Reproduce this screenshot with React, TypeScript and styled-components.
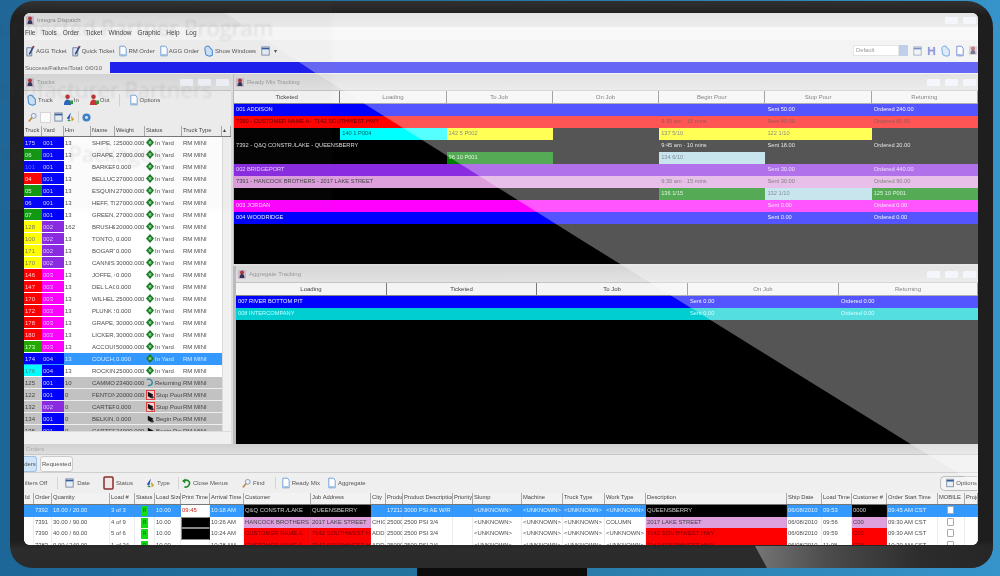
import React from "react";
import styled, { createGlobalStyle } from "styled-components";

const Global = createGlobalStyle`
  html, body { margin: 0; padding: 0; width: 1000px; height: 576px; overflow: hidden; }
  body { font-family: "Liberation Sans", Arial, sans-serif; }
  * { box-sizing: border-box; }
`;

const Page = styled.div`
  position: relative; width: 1000px; height: 576px; overflow: hidden;
  padding-top: 1px; display: flex; flex-direction: column; align-items: flex-start;
  background: linear-gradient(90deg, #1d6698 0%, #24749f 45%, #3694cb 100%);
`;
const Monitor = styled.div`
  position: relative; margin-left: 10px; width: 983px; height: 567px; flex: none;
  padding: 12px 15px 23px 14px; border-radius: 24px 26px 22px 22px;
  background: linear-gradient(180deg, #303030 0, #2a2a2a 6px, #1e1e1e 14px, #1e1e1e 540px, #2c2c2c 548px, #2a2a2a 100%);
`;
const BezelGlare = styled.div`
  position: absolute; left: 745px; bottom: 0; width: 238px; height: 22px; border-bottom-right-radius: 22px;
  clip-path: polygon(0 0, 100% 0, 100% 100%, 12px 100%);
  background: linear-gradient(90deg, #757575 0, #4c4c4c 30%, #2c2c2c 70%, #262626 100%);
`;
const Stand = styled.div`
  margin-left: 417px; width: 170px; height: 8px; flex: none; background: #0c0c0c;
`;
const Screen = styled.div`
  position: relative; width: 954px; height: 532px; overflow: hidden; border-radius: 6px; background: #f0f0f0;
`;
const Content = styled.div`
  display: flex; flex-direction: column; width: 954px; height: 532px; filter: blur(0.6px);
  font-size: 6px; color: #333; line-height: 1;
`;
const Glare = styled.div`
  position: absolute; inset: 0; background: rgba(255,255,255,0.333); pointer-events: none;
  clip-path: polygon(201px 0, 293px 61px, 559px 228px, 885px 430px, 954px 472px, 954px 0);
`;
const Ghost = styled.div`
  position: absolute; left: 0; top: 0; width: 332px; height: 210px; overflow: hidden;
  background: rgba(120,130,140,0.03); pointer-events: none; filter: blur(0.8px);
  font-family: "Open Sans", sans-serif; font-size: 22px; color: rgba(70,80,90,0.13); white-space: nowrap;
`;
const GhostLine = styled.div<{ $l: number; $t: number }>`
  position: absolute; left: ${p => p.$l}px; top: ${p => p.$t}px;
`;

const TitleBar = styled.div`
  height: 14px; flex: none; display: flex; align-items: center; gap: 3px; padding: 0 2px;
  background: linear-gradient(180deg, #d8d8d8, #e4e4e4); color: #8a8a8a;
`;
const WinBtn = styled.span`
  width: 13px; height: 7px; background: #eef2f8; border-radius: 1px; margin-left: 2px;
`;
const Spacer = styled.span` flex: 1; `;
const MenuBar = styled.div`
  height: 13px; flex: none; display: flex; align-items: center; gap: 6px; padding-left: 1px;
  background: #f6f6f6; font-size: 6.5px; color: #444;
`;
const Toolbar = styled.div<{ $h?: number; $gap?: number; $pl?: number }>`
  height: ${p => p.$h ?? 21}px; flex: none; display: flex; align-items: center; gap: ${p => p.$gap ?? 5}px;
  padding-left: ${p => p.$pl ?? 2}px; padding-right: 1px; background: #efefef; color: #555; font-size: 6px; white-space: nowrap;
`;
const Tool = styled.span<{ $gap?: number }>`
  display: inline-flex; align-items: center; gap: ${p => p.$gap ?? 1}px;
`;
const SelectBox = styled.span<{ $w?: number }>`
  width: ${p => p.$w ?? 46}px; height: 11px; background: #fff; border: 1px solid #d8d8d8; font-size: 5.8px; padding: 2px; color: #666;
`;
const SpinBtn = styled.span`
  width: 9px; height: 11px; background: #9fb8de; margin-left: -5px;
`;
const StatusStrip = styled.div`
  height: 13px; flex: none; display: flex; align-items: center; background: #f0f0f0; color: #666; white-space: nowrap;
`;
const StatusLabel = styled.span` width: 86px; flex: none; padding-left: 1px; `;
const Progress = styled.div`
  flex: 1; height: 11px; background: #1c1cf0;
`;
const Main = styled.div`
  height: 370px; flex: none; display: flex; gap: 2px; background: #ddd;
`;
const LeftPanel = styled.div`
  width: 207px; flex: none; display: flex; flex-direction: column; background: #f0f0f0; overflow: hidden;
`;
const RightCol = styled.div`
  flex: 1; display: flex; flex-direction: column; gap: 2px; min-width: 0;
`;
const PanelTitle = styled.div`
  height: 17px; flex: none; display: flex; align-items: center; gap: 3px; padding: 0 2px;
  background: linear-gradient(180deg, #d6d6d6, #e2e2e2); color: #999; font-size: 6px;
  border-bottom: 1px solid #c4c4c4;
`;
const TruckHead = styled.div`
  height: 11px; flex: none; display: grid; grid-template-columns: ${"18px 22px 27px 24px 30px 37px 40px 9px"};
  background: #efefef; border-bottom: 1px solid #777;
`;
const HeadCell = styled.div`
  padding: 2px 1px; border-right: 1px solid #aaa; color: #444; overflow: hidden; white-space: nowrap; text-align: left; font-size: 5.8px;
`;
const TruckBody = styled.div`
  height: 294px; flex: none; display: flex; background: #fff; overflow: hidden;
`;
const TruckRows = styled.div`
  width: 198px; flex: none; display: flex; flex-direction: column; overflow: hidden;
`;
const TruckRow = styled.div<{ $bg?: string; $c?: string }>`
  height: 12px; flex: none; display: grid; grid-template-columns: 18px 22px 27px 24px 30px 37px 40px;
  background: ${p => p.$bg ?? "#fff"}; color: ${p => p.$c ?? "#4c4c4c"}; align-items: stretch;
  border-bottom: 1px solid ${p => (p.$bg === "#c2c2c2" ? "#eee" : "transparent")};
`;
const TCell = styled.div<{ $bg?: string; $c?: string }>`
  background: ${p => p.$bg ?? "transparent"}; color: ${p => p.$c ?? "inherit"}; overflow: hidden; white-space: nowrap;
  padding: 0 1px; display: flex; align-items: center; gap: 1px;
`;
const ScrollV = styled.div`
  width: 9px; flex: none; background: #f0f0f0; border-left: 1px solid #ddd; position: relative;
`;
const ScrollH = styled.div`
  height: 8px; flex: none; background: #f0f0f0; border-top: 1px solid #ddd;
`;
const TrackPanel = styled.div<{ $h: number; $pl: number }>`
  height: ${p => p.$h}px; flex: none; display: flex; flex-direction: column; background: #000; overflow: hidden;
  border-left: ${p => p.$pl}px solid #bbb;
`;
const TrackGrid = styled.div<{ $cols: string }>`
  display: grid; grid-template-columns: ${p => p.$cols};
`;
const TrackHead = styled(TrackGrid)`
  height: 13px; flex: none; background: #f4f4f4; border-bottom: 1px solid #888;
`;
const TrackHeadCell = styled.div`
  text-align: center; padding-top: 3px; border-right: 1px solid #777; color: #444;
`;
const TrackRowBox = styled(TrackGrid)<{ $bg?: string; $c?: string }>`
  height: 12px; flex: none; background: ${p => p.$bg ?? "#000"}; color: ${p => p.$c ?? "#fff"}; font-size: 5.7px;
`;
const TrackCell = styled.div<{ $bg?: string; $c?: string; $span?: number; $start?: number }>`
  background: ${p => p.$bg ?? "transparent"}; color: ${p => p.$c ?? "inherit"};
  grid-column: ${p => p.$start ?? "auto"} / span ${p => p.$span ?? 1};
  padding: 3px 2px 0; white-space: nowrap; overflow: hidden;
`;
const Fill = styled.div` flex: 1; background: #000; `;
const Orders = styled.div`
  flex: 1; display: flex; flex-direction: column; background: #eee; overflow: hidden; min-height: 0;
`;
const OrdersTitle = styled.div`
  height: 11px; flex: none; padding: 2px 2px 0; background: linear-gradient(180deg, #cfcfcf, #dedede); color: #aaa;
  border-bottom: 1px solid #c8c8c8;
`;
const Tabs = styled.div`
  height: 18px; flex: none; display: flex; align-items: flex-end; gap: 3px; background: #ededed; border-bottom: 1px solid #d0d0d0;
`;
const Tab = styled.div<{ $on?: boolean; $w: number }>`
  width: ${p => p.$w}px; height: 16px; border: 1px solid ${p => (p.$on ? "#9dc2e6" : "#ccc")};
  border-radius: ${p => (p.$on ? "0 3px 3px 0" : "3px")}; border-left-width: ${p => (p.$on ? 0 : 1)}px;
  background: ${p => (p.$on ? "#cfe4f7" : "#f7f7f7")}; color: #555; display: flex; align-items: center; justify-content: center;
  overflow: hidden; white-space: nowrap;
`;
const OptionsBtn = styled.span`
  width: 37px; height: 15px; border: 1px solid #bbb; border-right: 0; border-radius: 5px 0 0 5px; display: inline-flex; align-items: center; gap: 2px;
  padding-left: 5px; background: #f4f4f4; overflow: hidden; color: #555;
`;
const Divider = styled.span`
  width: 1px; height: 12px; background: #d4d4d4; flex: none;
`;
const ToolGap = styled.span<{ $w: number }>` width: ${p => p.$w}px; flex: none; `;
const ORDER_COLS = "10px 18px 58px 25px 20px 26px 29px 34px 67px 60px 15px 17px 50px 20px 49px 41px 42px 41px 141px 35px 30px 35px 51px 27px 13px";
const OrdHead = styled.div`
  height: 12px; flex: none; display: grid; grid-template-columns: ${ORDER_COLS}; background: #f2f2f2; border-bottom: 1px solid #777;
`;
const OrdRow = styled.div<{ $bg?: string; $c?: string }>`
  height: 11.7px; flex: none; display: grid; grid-template-columns: ${ORDER_COLS};
  background: ${p => p.$bg ?? "#fff"}; color: ${p => p.$c ?? "#4c4c4c"}; font-size: 5.9px;
`;
const OrdCell = styled.div<{ $bg?: string; $c?: string; $bd?: boolean }>`
  background: ${p => p.$bg ?? "transparent"}; color: ${p => p.$c ?? "inherit"};
  padding: 3px 1px 0; overflow: hidden; white-space: nowrap; display: flex; justify-content: flex-start;
  ${p => (p.$bd ? "border: 1px solid #888;" : "")}
  border-right: 1px solid rgba(120,120,120,0.14);
`;
const CheckBox = styled.span`
  width: 7px; height: 8px; border: 1px solid #aaa; border-radius: 1px; background: #fff; margin-left: 8px; margin-top: -2px;
`;
const GreenBadge = styled.span`
  width: 7px; height: 10px; background: #11dd11; margin: -2px 0 0 5px; font-size: 5px; padding-top: 2px; color: #063; text-align: center;
`;

/* drawings */
const Doc = ({ c = "#6fa2d8" }: { c?: string }) => (
  <svg width="8" height="12" viewBox="0 0 10 14"><path d="M1 1h6l2 3v9H1z" fill="#fff" stroke={c} strokeWidth="1.2" /><path d="M2 11c2 1 5 1 6 0" stroke={c} fill="none" /></svg>
);
const Pen = () => (
  <svg width="9" height="12" viewBox="0 0 11 14"><path d="M1 3h6v10H1z" fill="#dfe8f6" stroke="#5b6f99" /><path d="M9.5 1 4 11" stroke="#33457a" strokeWidth="2" /><path d="M9.5 1l-1 2" stroke="#c33" strokeWidth="2" /></svg>
);
const Windows = () => (
  <svg width="10" height="12" viewBox="0 0 12 14"><path d="M1 4C1 1 6 0 7 3l3 3v6c-2 2-7 1-8-1z" fill="#cfe2f8" stroke="#4b8fd6" strokeWidth="1.3" /></svg>
);
const Person = ({ c = "#2a66c4" }: { c?: string }) => (
  <svg width="10" height="12" viewBox="0 0 11 13"><circle cx="5" cy="3" r="2.5" fill="#b33" /><path d="M1 12c0-4 2-6 4-6s4 2 4 6z" fill={c} /><path d="M8 7h3v4H8z" fill="#2a9a3a" /></svg>
);
const AppGlyph = () => (
  <svg width="8" height="11" viewBox="0 0 10 13"><path d="M0 1h10v11H0z" fill="#c8b8c8" /><circle cx="5" cy="4" r="2.4" fill="#a33" /><path d="M2 11c0-3 1-5 3-5s3 2 3 5z" fill="#335" /></svg>
);
const Diamond = () => (
  <svg width="8" height="9" viewBox="0 0 9 10" style={{ flex: "none" }}><path d="M4.5 0 9 5 4.5 10 0 5z" fill="#1c7a2a" /><rect x="3" y="3.5" width="3" height="3" fill="#7fce7f" /></svg>
);
const Returning = () => (
  <svg width="8" height="9" viewBox="0 0 9 10" style={{ flex: "none" }}><path d="M1 1.5c4-1 6 1 6 3.5S5 8.5 2 8.5" fill="none" stroke="#2a8aa0" strokeWidth="1.6" /></svg>
);
const Pour = ({ stop }: { stop?: boolean }) => (
  <svg width="9" height="10" viewBox="0 0 10 11" style={{ flex: "none" }}>
    {stop && <rect x="0.5" y="0.5" width="9" height="10" fill="#f4d0d0" stroke="#d33" />}
    <path d="M2 2l6 3-2 4-4-2z" fill="#111" /><circle cx="7" cy="8" r="1.5" fill="#333" />
  </svg>
);
const Mag = () => (
  <svg width="9" height="11" viewBox="0 0 11 12"><circle cx="7" cy="4" r="3" fill="#e8eef8" stroke="#7a8fb0" /><path d="M5 6 1 11" stroke="#c88a3a" strokeWidth="2" /></svg>
);
const Calendar = () => (
  <svg width="9" height="10" viewBox="0 0 11 12"><rect x="1" y="1" width="9" height="10" fill="#e9eef5" stroke="#6d7f99" /><path d="M1 3h9" stroke="#355d9c" strokeWidth="2" /></svg>
);
const Help = () => (
  <svg width="9" height="9" viewBox="0 0 10 10"><circle cx="5" cy="5" r="4.5" fill="#3f82c8" /><circle cx="5" cy="5" r="1.6" fill="#dfeeff" /></svg>
);
const StatusFrame = () => (
  <svg width="11" height="14" viewBox="0 0 11 14"><rect x="1" y="1" width="9" height="12" rx="1" fill="#efe6e6" stroke="#8a2c2c" strokeWidth="1.5" /></svg>
);
const TypeIcon = () => (
  <svg width="9" height="11" viewBox="0 0 11 12"><path d="M6 0 1 7l3 2z" fill="#2a55b8" /><path d="M6 4l4 4-3 3z" fill="#d6a020" /><path d="M1 9l3 2 2-2z" fill="#2a9a3a" /></svg>
);
const CloseMenus = () => (
  <svg width="9" height="11" viewBox="0 0 11 12"><path d="M2 3c5-3 8 1 7 4s-4 4-6 3" fill="none" stroke="#1f8a2c" strokeWidth="2" /><path d="M0 3l4-3v6z" fill="#1f8a2c" /></svg>
);
const Save = () => (
  <svg width="9" height="10" viewBox="0 0 10 11"><path d="M1 1h8v9H1z" fill="#5a68c4" /><rect x="3" y="1" width="4" height="3" fill="#e6e9f8" /><rect x="3" y="6" width="4" height="4" fill="#e6e9f8" /></svg>
);

type TC = { t?: string; bg?: string; c?: string; span?: number; start?: number };
const T = (num: string, numBg: string, numC: string, yard: string, yardBg: string, hm: string, name: string, w: string, status: string, rowBg?: string, rowC?: string) =>
  ({ num, numBg, numC, yard, yardBg, hm, name, w, status, rowBg, rowC });
const B = "#0000ff", G = "#119911", R = "#ff0000", Y = "#ffff00", P = "#8a2be2", M = "#ff00ff";
const trucks = [
  T("175", B, "#ddf", "001", B, "13", "SHIPE, 1", "25000.000", "In Yard"),
  T("06", G, "#dfd", "001", B, "13", "GRAPE,", "27000.000", "In Yard"),
  T("101", B, "#66f", "001", B, "13", "BARKEP", "0.000", "In Yard"),
  T("04", R, "#fdd", "001", B, "13", "BELLUC", "27000.000", "In Yard"),
  T("05", G, "#dfd", "001", B, "13", "ESQUIN,", "27000.000", "In Yard"),
  T("06", B, "#ddf", "001", B, "13", "HEFF, TI", "27000.000", "In Yard"),
  T("07", G, "#dfd", "001", B, "13", "GREEN,", "27000.000", "In Yard"),
  T("128", Y, "#776", "002", P, "162", "BRUSHE", "20000.000", "In Yard"),
  T("100", Y, "#776", "002", P, "13", "TONTO,", "0.000", "In Yard"),
  T("171", Y, "#776", "002", P, "13", "BOGART", "0.000", "In Yard"),
  T("170", Y, "#776", "002", P, "13", "CANNIS", "30000.000", "In Yard"),
  T("146", R, "#fcc", "003", M, "13", "JOFFE, C", "0.000", "In Yard"),
  T("147", R, "#fcc", "003", M, "13", "DEL LAC", "0.000", "In Yard"),
  T("170", R, "#fcc", "003", M, "13", "WILHEL", "25000.000", "In Yard"),
  T("172", R, "#fcc", "003", M, "13", "PLUNK S", "0.000", "In Yard"),
  T("178", R, "#fcc", "003", M, "13", "GRAPE,", "30000.000", "In Yard"),
  T("180", R, "#fcc", "003", M, "13", "LICKER,", "30000.000", "In Yard"),
  T("173", "#22aa00", "#dfd", "003", M, "13", "ACCOUN", "50000.000", "In Yard"),
  T("174", B, "#ddf", "004", B, "13", "COUCH,", "0.000", "In Yard", "#3399ff", "#d8eaff"),
  T("176", "#00ffff", "#488", "004", B, "13", "ROCKIN", "25000.000", "In Yard"),
  T("125", "#c2c2c2", "#444", "001", B, "10", "CAMMO", "23400.000", "Returning", "#c2c2c2", "#444"),
  T("122", "#c2c2c2", "#444", "001", B, "0", "FENTON", "20000.000", "Stop Pour", "#c2c2c2", "#444"),
  T("132", "#c2c2c2", "#444", "002", P, "0", "CARTEP", "0.000", "Stop Pour", "#c2c2c2", "#444"),
  T("134", "#c2c2c2", "#444", "001", B, "0", "BELKIN,", "0.000", "Begin Pour", "#c2c2c2", "#444"),
  T("135", "#c2c2c2", "#444", "001", B, "0", "CARTER", "24900.000", "Begin Pour", "#c2c2c2", "#444"),
];
const statusIcon = (s: string) =>
  s === "In Yard" ? <Diamond /> : s === "Returning" ? <Returning /> : s === "Stop Pour" ? <Pour stop /> : <Pour />;

const RM_COLS = "repeat(7, 1fr)";
const GRN = "#008000", LB = "#add8e6", PL = "#dda0dd";
const rmRows: { bg?: string; c?: string; cells: TC[] }[] = [
  { bg: B, c: "#eef", cells: [{ t: "001  ADDISON", span: 5 }, { t: "Sent 50.00" }, { t: "Ordered 240.00" }] },
  { bg: R, c: "#5e0000", cells: [{ t: "7390 - CUSTOMER NAME A - 7142 SOUTHWEST HWY", span: 4 }, { t: "9:30 am · 15 mins" }, { t: "Sent 40.00" }, { t: "Ordered 60.00" }] },
  { cells: [{ start: 2, t: "140 1  P004", bg: "#00ffff", c: "#066" }, { t: "142 5  P002", bg: Y, c: "#554" }, { start: 5, t: "137  5/10", bg: Y, c: "#554" }, { t: "122  1/10", bg: Y, c: "#554" }] },
  { c: "#ddd", cells: [{ t: "7392 - Q&Q CONSTR./LAKE - QUEENSBERRY", span: 4 }, { t: "9:45 am · 10 mins" }, { t: "Sent 18.00" }, { t: "Ordered 20.00" }] },
  { cells: [{ start: 3, t: "96 10  P001", bg: GRN, c: "#cec" }, { start: 5, t: "134  6/10", bg: LB, c: "#456" }] },
  { bg: P, c: "#e4d2fa", cells: [{ t: "002  BRIDGEPORT", span: 5 }, { t: "Sent 30.00" }, { t: "Ordered 440.00" }] },
  { bg: PL, c: "#444", cells: [{ t: "7391 - HANCOCK BROTHERS - 2017 LAKE STREET", span: 4 }, { t: "9:30 am · 15 mins" }, { t: "Sent 30.00" }, { t: "Ordered 90.00" }] },
  { cells: [{ start: 5, t: "136  1/15", bg: GRN, c: "#cec" }, { t: "132  1/10", bg: LB, c: "#456" }, { t: "125  10  P001", bg: GRN, c: "#cec" }] },
  { bg: M, c: "#ffd8ff", cells: [{ t: "003  JORDAN", span: 5 }, { t: "Sent 0.00" }, { t: "Ordered 0.00" }] },
  { bg: B, c: "#eef", cells: [{ t: "004  WOODRIDGE", span: 5 }, { t: "Sent 0.00" }, { t: "Ordered 0.00" }] },
];

const AG_COLS = "151px 150px 151px 151px 1fr";
const UNK = "<UNKNOWN>";
const ordHead = ["Id", "Order", "Quantity", "Load #", "Status", "Load Size", "Print Time", "Arrival Time", "Customer", "Job Address", "City", "Produ", "Product Description", "Priority", "Slump", "Machine", "Truck Type", "Work Type", "Description", "Ship Date", "Load Time", "Customer #", "Order Start Time", "MOBILE", "Proje"];
type OC = { t: string; bg?: string; c?: string; bd?: boolean };
const ordRow = (id: string, qty: string, load: string, print: OC, arr: string, bg: string, c: string, cust: string, job: string, city: string, prod: string, desc: string, work: string, ship: string, loadT: string, custNo: string, start: string): OC[] => [
  { t: "" }, { t: id }, { t: qty }, { t: load }, { t: "*" }, { t: "10.00" }, print, { t: arr },
  { t: cust, bg, c }, { t: job, bg, c }, { t: city }, { t: prod }, { t: desc }, { t: "" },
  { t: UNK }, { t: UNK }, { t: UNK }, { t: work },
  { t: job, bg, c }, { t: ship }, { t: loadT }, { t: custNo, bg, c }, { t: start }, { t: "[]" }, { t: "" },
];
const black: OC = { t: "", bg: "#000", bd: true };
const orders = [
  { bg: "#3399ff", c: "#e4f0ff", cells: ordRow("7392", "18.00 / 20.00", "3 of 3", { t: "09:45", bg: "#fff", c: "#c22" }, "10:18 AM", "#000", "#ccc", "Q&Q CONSTR./LAKE", "QUEENSBERRY", "", "17212", "3000 PSI AE W/R 80", UNK, "06/08/2010", "09:53", "0000", "09:45 AM CST") },
  { cells: ordRow("7391", "30.00 / 90.00", "4 of 9", black, "10:26 AM", PL, "#444", "HANCOCK BROTHERS", "2017 LAKE STREET", "CHIG", "25000", "2500 PSI 3/4", "COLUMN", "06/08/2010", "09:56", "C00", "09:30 AM CST") },
  { cells: ordRow("7390", "40.00 / 60.00", "5 of 6", black, "10:24 AM", R, "#700", "CUSTOMER NAME A", "7142 SOUTHWEST HWY", "ADDI", "25000", "2500 PSI 3/4", UNK, "06/08/2010", "09:59", "C00", "09:30 AM CST") },
  { cells: ordRow("7383", "0.00 / 240.00", "1 of 24", { t: "" }, "10:38 AM", R, "#700", "CUSTOMER NAME A", "7142 SOUTHWEST HWY", "ADDI", "35000", "3500 PSI 3/4", UNK, "06/08/2010", "11:08", "C00", "10:30 AM CST") },
];

const TrackHeaderRow = ({ cols, names }: { cols: string; names: string[] }) => (
  <TrackHead $cols={cols}>{names.map(n => <TrackHeadCell key={n}>{n}</TrackHeadCell>)}</TrackHead>
);

export default function App() {
  return (
    <Page>
      <Global />
      <Monitor>
        <Screen>
          <Content>
            <TitleBar>
              <AppGlyph /><span>Integra Dispatch</span><Spacer /><WinBtn /><WinBtn />
            </TitleBar>
            <MenuBar>
              {["File", "Tools", "Order", "Ticket", "Window", "Graphic", "Help", "Log"].map(m => <span key={m}>{m}</span>)}
            </MenuBar>
            <Toolbar $gap={5}>
              <Tool><Pen />AGG Ticket</Tool>
              <Tool><Pen />Quick Ticket</Tool>
              <Tool><Doc />RM Order</Tool>
              <Tool><Doc />AGG Order</Tool>
              <Tool><Windows />Show Windows</Tool>
              <Tool $gap={4}><Calendar />▾</Tool>
              <Spacer />
              <SelectBox>Default</SelectBox><SpinBtn />
              <Tool $gap={5}><Calendar /><Save /><Windows /><Doc c="#3a58c8" /><AppGlyph /></Tool>
            </Toolbar>
            <StatusStrip>
              <StatusLabel>Success/Failure/Total:  0/0/10</StatusLabel>
              <Progress />
            </StatusStrip>
            <Main>
              <LeftPanel>
                <PanelTitle><AppGlyph />Trucks<Spacer /><WinBtn /><WinBtn /><WinBtn /></PanelTitle>
                <Toolbar $h={17} $gap={10} $pl={3}>
                  <Tool><Windows />Truck</Tool>
                  <Tool><Person />In</Tool>
                  <Tool><Person c="#c33" />Out</Tool>
                  <Divider />
                  <Tool><Doc />Options</Tool>
                </Toolbar>
                <Toolbar $h={18} $gap={3} $pl={4}>
                  <Mag /><SelectBox $w={11} /><Calendar /><TypeIcon /><Divider /><Help />
                </Toolbar>
                <TruckHead>
                  {["Truck", "Yard", "Hm", "Name", "Weight", "Status", "Truck Type", "▴"].map(h => <HeadCell key={h}>{h}</HeadCell>)}
                </TruckHead>
                <TruckBody>
                  <TruckRows>
                    {trucks.map((r, i) => (
                      <TruckRow key={i} $bg={r.rowBg} $c={r.rowC}>
                        <TCell $bg={r.numBg} $c={r.numC}>{r.num}</TCell>
                        <TCell $bg={r.yardBg} $c="#d0d0f8">{r.yard}</TCell>
                        <TCell>{r.hm}</TCell>
                        <TCell>{r.name}</TCell>
                        <TCell>{r.w}</TCell>
                        <TCell>{statusIcon(r.status)}{r.status}</TCell>
                        <TCell>RM MINI</TCell>
                      </TruckRow>
                    ))}
                  </TruckRows>
                  <ScrollV />
                </TruckBody>
                <ScrollH />
              </LeftPanel>
              <RightCol>
                <TrackPanel $h={190} $pl={1}>
                  <PanelTitle><AppGlyph />Ready Mix Tracking<Spacer /><WinBtn /><WinBtn /><WinBtn /></PanelTitle>
                  <TrackHeaderRow cols={RM_COLS} names={["Ticketed", "Loading", "To Job", "On Job", "Begin Pour", "Stop Pour", "Returning"]} />
                  {rmRows.map((r, i) => (
                    <TrackRowBox key={i} $cols={RM_COLS} $bg={r.bg} $c={r.c}>
                      {r.cells.map((c, j) => <TrackCell key={j} $bg={c.bg} $c={c.c} $span={c.span} $start={c.start}>{c.t}</TrackCell>)}
                    </TrackRowBox>
                  ))}
                  <Fill />
                </TrackPanel>
                <TrackPanel $h={178} $pl={3}>
                  <PanelTitle><AppGlyph />Aggregate Tracking<Spacer /><WinBtn /><WinBtn /><WinBtn /></PanelTitle>
                  <TrackHeaderRow cols={AG_COLS} names={["Loading", "Ticketed", "To Job", "On Job", "Returning"]} />
                  <TrackRowBox $cols={AG_COLS} $bg={B} $c="#eef">
                    <TrackCell $span={3}>007  RIVER BOTTOM PIT</TrackCell><TrackCell>Sent 0.00</TrackCell><TrackCell>Ordered 0.00</TrackCell>
                  </TrackRowBox>
                  <TrackRowBox $cols={AG_COLS} $bg="#00ced1" $c="#bff">
                    <TrackCell $span={3}>008  INTERCOMPANY</TrackCell><TrackCell>Sent 0.00</TrackCell><TrackCell>Ordered 0.00</TrackCell>
                  </TrackRowBox>
                  <Fill />
                </TrackPanel>
              </RightCol>
            </Main>
            <Orders>
              <OrdersTitle>Orders</OrdersTitle>
              <Tabs>
                <Tab $on $w={13}>ders</Tab>
                <Tab $w={33}>Requested</Tab>
              </Tabs>
              <Toolbar $h={20} $gap={0} $pl={1}>
                <Tool>ilters Off</Tool><ToolGap $w={10} /><Divider /><ToolGap $w={7} />
                <Tool $gap={3}><Calendar />Date</Tool><ToolGap $w={13} />
                <Tool $gap={2}><StatusFrame />Status</Tool><ToolGap $w={13} />
                <Tool $gap={2}><TypeIcon />Type</Tool><ToolGap $w={8} /><Divider /><ToolGap $w={3} />
                <Tool $gap={2}><CloseMenus />Close Menus</Tool><ToolGap $w={14} />
                <Tool $gap={2}><Mag />Find</Tool><ToolGap $w={10} /><Divider /><ToolGap $w={6} />
                <Tool $gap={2}><Doc />Ready Mix</Tool><ToolGap $w={8} />
                <Tool $gap={2}><Doc />Aggregate</Tool>
                <Spacer />
                <OptionsBtn><Calendar />Options</OptionsBtn>
              </Toolbar>
              <OrdHead>
                {ordHead.map(h => <HeadCell key={h}>{h}</HeadCell>)}
              </OrdHead>
              {orders.map((r, i) => (
                <OrdRow key={i} $bg={r.bg} $c={r.c}>
                  {r.cells.map((c, j) => (
                    <OrdCell key={j} $bg={c.bg} $c={c.c} $bd={c.bd}>
                      {c.t === "*" ? <GreenBadge>R</GreenBadge> : c.t === "[]" ? <CheckBox /> : c.t}
                    </OrdCell>
                  ))}
                </OrdRow>
              ))}
            </Orders>
          </Content>
          <Glare />
        </Screen>
        <BezelGlare />
      </Monitor>
      <Stand />
      <Ghost>
        <GhostLine $l={-15} $t={12}>Connected Partner Program</GhostLine>
        <GhostLine $l={-22} $t={74}>Manufacturer Partners</GhostLine>
        <GhostLine $l={-18} $t={138}>Product Packages</GhostLine>
      </Ghost>
    </Page>
  );
}
